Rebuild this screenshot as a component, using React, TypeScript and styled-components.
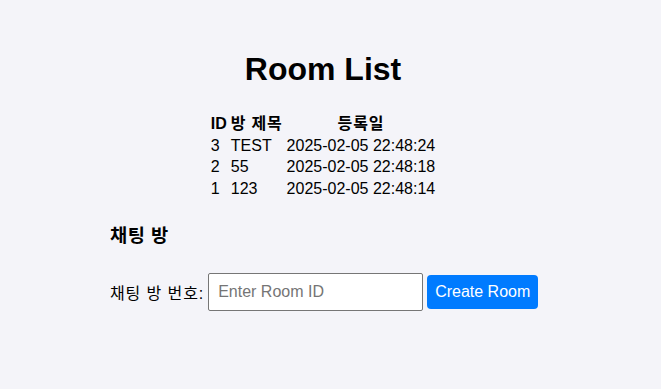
import styled, { createGlobalStyle } from "styled-components";

const GlobalStyle = createGlobalStyle`
  body {
    margin: 0;
    background: #f4f4f9;
    font-family: "Liberation Sans", Arial, "Noto Sans CJK KR", sans-serif;
    color: #000;
  }
`;

const Page = styled.div`
  width: 646px;
  padding-top: 30px;
`;

const Container = styled.div`
  width: 426px;
  margin: 0 auto;
`;

const Title = styled.h1`
  font-size: 32px;
  text-align: center;
  margin: 21px 0 24px;
  line-height: 37px;
`;

const Table = styled.table`
  margin: 0 auto;
  font-size: 16px;
  border-spacing: 2px;
  line-height: 17.5px;
`;

const Th = styled.th<{ $ko?: boolean }>`
  padding: 1px;
  font-weight: bold;
  letter-spacing: ${(p) => (p.$ko ? "0.8px" : "0")};
`;

const Td = styled.td`
  padding: 1px;
`;

const Section = styled.div`
  margin-top: 20px;
`;

const SectionTitle = styled.h3`
  font-size: 18.7px;
  margin: 0 0 26px;
  letter-spacing: 0.5px;
`;

const Row = styled.div`
  display: flex;
  align-items: center;
  font-size: 16px;
  white-space: nowrap;
`;

const Label = styled.label`
  flex-shrink: 0;
  margin-right: 4px;
  letter-spacing: 0.9px;
`;

const Input = styled.input`
  flex-shrink: 0;
  width: 215px;
  height: 38px;
  box-sizing: border-box;
  padding: 0 9px;
  font-size: 16px;
  font-family: "Liberation Sans", Arial, sans-serif;
  border: 1px solid #767676;
  border-radius: 2px;
  background: #fff;
  &::placeholder {
    color: #757575;
  }
`;

const Button = styled.button`
  flex-shrink: 0;
  margin-left: 4px;
  height: 34px;
  box-sizing: border-box;
  background: #007bff;
  color: #fff;
  border: none;
  border-radius: 4px;
  font-size: 16px;
  font-family: "Liberation Sans", Arial, sans-serif;
  padding: 0 8px;
`;

const rooms = [
  { id: 3, title: "TEST", date: "2025-02-05 22:48:24" },
  { id: 2, title: "55", date: "2025-02-05 22:48:18" },
  { id: 1, title: "123", date: "2025-02-05 22:48:14" },
];

export default function App() {
  return (
    <Page>
      <GlobalStyle />
      <Container>
        <Title>Room List</Title>
        <Table>
          <thead>
            <tr>
              <Th>ID</Th>
              <Th $ko>방 제목</Th>
              <Th $ko>등록일</Th>
            </tr>
          </thead>
          <tbody>
            {rooms.map((r) => (
              <tr key={r.id}>
                <Td>{r.id}</Td>
                <Td>{r.title}</Td>
                <Td>{r.date}</Td>
              </tr>
            ))}
          </tbody>
        </Table>
        <Section>
          <SectionTitle>채팅 방</SectionTitle>
          <Row>
            <Label>채팅 방 번호:</Label>
            <Input placeholder="Enter Room ID" />
            <Button>Create Room</Button>
          </Row>
        </Section>
      </Container>
    </Page>
  );
}
